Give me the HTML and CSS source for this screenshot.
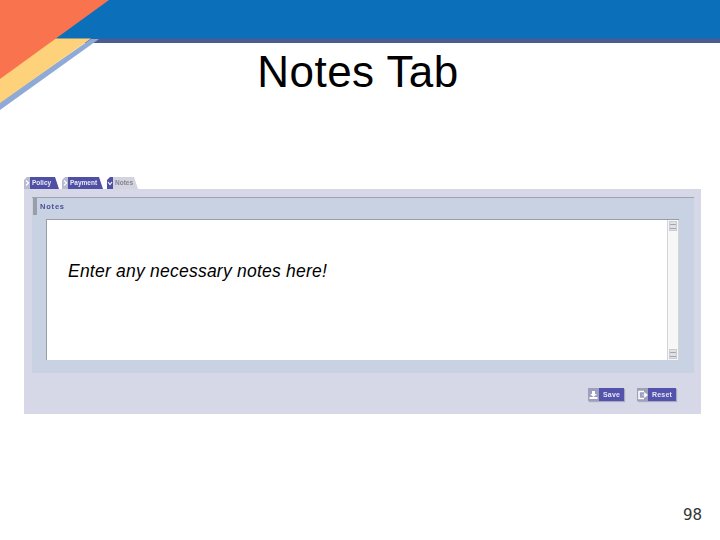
FILE: index.html
```html
<!DOCTYPE html>
<html lang="en">
<head>
<meta charset="utf-8">
<title>Notes Tab</title>
<link rel="stylesheet" href="styles.css">
</head>
<body>
<div class="slide">
  <svg class="banner" width="720" height="115" viewBox="0 0 720 115" aria-hidden="true">
    <rect x="0" y="0" width="720" height="43" fill="#4a5d92"/>
    <rect x="0" y="0" width="720" height="38.500" fill="#0b70b9"/>
    <polygon points="0,110 99,39 91,39 0,102" fill="#8faad6"/>
    <polygon points="0,103 91,38.500 55,38.500 0,78" fill="#fdd27a"/>
    <polygon points="0,0 109,0 0,79" fill="#f9744e"/>
  </svg>
  <h1 class="title">Notes Tab</h1>
  <div class="app">
    <nav class="tabs">
      <div class="tab tab-policy"><span class="tab-icon"><svg width="6" height="8" viewBox="0 0 6 8"><path d="M2 1.500 L4.500 4 L2 6.500" fill="none" stroke="#fff" stroke-width="1.200"/></svg></span><span class="tab-label">Policy</span></div>
      <div class="tab tab-payment"><span class="tab-icon"><svg width="6" height="8" viewBox="0 0 6 8"><path d="M2 1.500 L4.500 4 L2 6.500" fill="none" stroke="#fff" stroke-width="1.200"/></svg></span><span class="tab-label">Payment</span></div>
      <div class="tab tab-notes"><span class="tab-icon"><svg width="6" height="8" viewBox="0 0 6 8"><path d="M1 3 L3 5.500 L5 3" fill="none" stroke="#fff" stroke-width="1.200"/></svg></span><span class="tab-label">Notes</span></div>
    </nav>
    <main class="panel">
      <section class="section">
        <div class="section-head"><span class="section-title">Notes</span></div>
        <div class="editor">
          <p class="editor-text">Enter any necessary notes here!</p>
          <div class="scrollbar">
            <span class="scroll-btn scroll-up"></span>
            <span class="scroll-btn scroll-down"></span>
          </div>
        </div>
      </section>
      <div class="actions">
        <div class="btn btn-save">
          <span class="btn-icon"><svg width="11" height="12" viewBox="0 0 11 12"><path d="M4 2 H7 V5 H9 L5.500 8 L2 5 H4 Z" fill="#fff"/><rect x="1.500" y="8" width="8" height="2" fill="#fff"/></svg></span>
          <span class="btn-label">Save</span>
        </div>
        <div class="btn btn-reset">
          <span class="btn-icon"><svg width="11" height="12" viewBox="0 0 11 12"><path d="M7 2.500 H2 V9.500 H7" fill="none" stroke="#fff" stroke-width="1.600"/><path d="M5 6 H7.500 V3.500 L10.500 6 L7.500 8.500 V6" fill="#fff" stroke="#fff" stroke-width=".6"/></svg></span>
          <span class="btn-label">Reset</span>
        </div>
      </div>
    </main>
  </div>
  <footer class="page-number">98</footer>
</div>
</body>
</html>
```
FILE: styles.css
```css
* { box-sizing: border-box; }
html, body { margin: 0; padding: 0; background: #fff; }
.slide {
  position: relative;
  width: 720px;
  height: 540px;
  overflow: hidden;
  display: flex;
  flex-direction: column;
  font-family: "Liberation Sans", Arial, sans-serif;
}
.banner { position: absolute; left: 0; top: 0; }
.title {
  position: relative;
  margin: 47px 0 0 -4px;
  height: 50px;
  line-height: 50px;
  font-size: 44px;
  font-weight: 400;
  letter-spacing: .45px;
  text-align: center;
  color: #000;
}
.app { margin: 80px 0 0 24px; width: 677px; }
.tabs { display: flex; height: 12px; gap: 3px; align-items: flex-end; filter: blur(.3px); }
.tab {
  display: flex;
  align-items: center;
  height: 12px;
  clip-path: polygon(0 3px, 3px 0, calc(100% - 4px) 0, 100% 100%, 0 100%);
}
.tab-policy { width: 35px; background: linear-gradient(to right, #b9bbd2 6px, #4f4fa5 6px); }
.tab-payment { width: 41px; background: linear-gradient(to right, #b9bbd2 6px, #4f4fa5 6px); }
.tab-notes { margin-left: 1px; width: 31px; background: linear-gradient(to right, #4f4fa5 6px, #d3d4e0 6px); }
.tab-icon {
  display: flex;
  align-items: center;
  justify-content: center;
  width: 6px;
  height: 12px;
  flex: none;
}
.tab-label {
  padding-left: 2px;
  font-size: 6.500px;
  font-weight: 700;
  line-height: 12px;
  color: #e9e9f6;
  white-space: nowrap;
}
.tab-notes .tab-label { color: #85858f; }
.panel {
  height: 225px;
  padding: 8px 7px 0 8px;
  background: #d7d8e7;
}
.section {
  height: 176px;
  padding-left: 1px;
  background: #c9d2e3;
  border-top: 1px solid #9ea3b0;
}
.section-head {
  height: 17px;
  border-left: 4px solid #9b9da8;
  padding-left: 3px;
  display: flex;
  align-items: center;
}
.section-title {
  font-size: 7.500px;
  font-weight: 700;
  letter-spacing: .8px;
  color: #4a4f93;
  filter: blur(.3px);
}
.editor {
  display: flex;
  justify-content: space-between;
  margin: 4px 15px 0 13px;
  height: 141px;
  background: #fff;
  border-top: 1px solid #9a9da5;
  border-left: 1px solid #9a9da5;
}
.editor-text {
  margin: 41px 0 0 21px;
  font-size: 17.500px;
  line-height: 20px;
  letter-spacing: .23px;
  font-style: italic;
  color: #000;
}
.scrollbar {
  width: 12px;
  display: flex;
  flex-direction: column;
  justify-content: space-between;
  padding: 1px;
  background: #f7f7f7;
  border-left: 1px solid #d5d5d5;
  border-right: 1px solid #d5d5d5;
}
.scroll-btn {
  display: flex;
  align-items: center;
  justify-content: center;
  height: 10px;
  background: #dfe1e6;
  border: 1px solid #c9ccd2;
}
.scroll-btn::before {
  content: "";
  width: 6px;
  height: 3px;
  border-top: 1px solid #a3a6ad;
  border-bottom: 1px solid #a3a6ad;
}
.actions {
  display: flex;
  justify-content: flex-end;
  gap: 13px;
  margin-top: 15px;
  padding-right: 18px;
  filter: blur(.3px);
}
.btn {
  display: flex;
  height: 13px;
  box-shadow: 1px 1px 1px #a9abc0;
}
.btn-save { width: 36px; }
.btn-reset { width: 39px; }
.btn-icon {
  display: flex;
  align-items: center;
  justify-content: center;
  width: 11px;
  flex: none;
  background: #9d9fbb;
}
.btn-label {
  display: flex;
  align-items: center;
  justify-content: center;
  flex: 1;
  background: #5353ab;
  font-size: 7px;
  font-weight: 700;
  letter-spacing: .2px;
  color: #e5e5f5;
}
.page-number {
  position: absolute;
  right: 18px;
  top: 507px;
  font-family: "DejaVu Sans", sans-serif;
  font-size: 15px;
  line-height: 17px;
  color: #333;
}
```
